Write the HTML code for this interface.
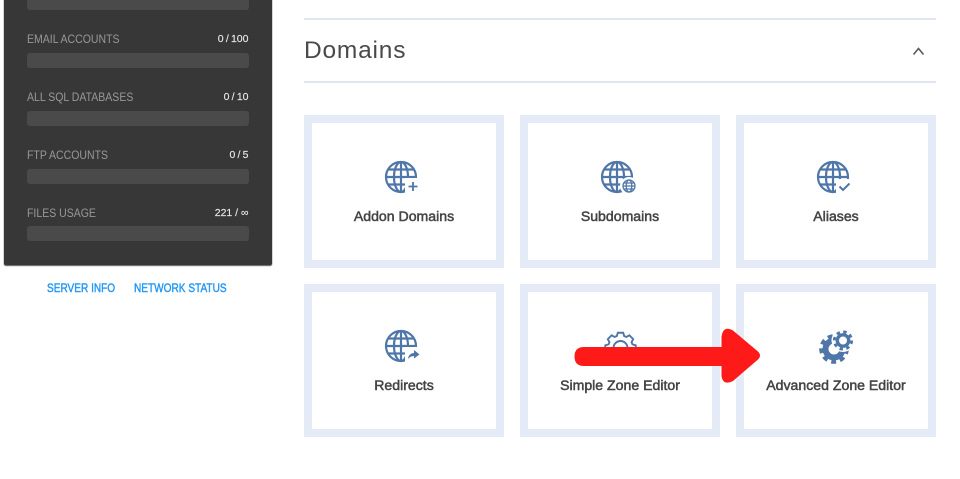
<!DOCTYPE html>
<html>
<head>
<meta charset="utf-8">
<style>
html,body{margin:0;padding:0;background:#fff;width:960px;height:479px;overflow:hidden;font-family:"Liberation Sans",sans-serif}
.a{position:absolute}
#side{left:3.5px;top:-10px;width:268.5px;height:274.500px;background:#373737;border-radius:2px;box-shadow:0 0 1px #777,0 1px 1px #555}
.bar{position:absolute;left:27px;width:221.500px;height:15px;background:#4a4a4a;border-radius:3px}
.lab{position:absolute;left:27px;font-size:12.300px;line-height:14px;color:#989898;white-space:nowrap;transform:scaleX(.855);transform-origin:0 0;margin-top:-.5px}
.val{position:absolute;right:711.5px;font-size:10.5px;line-height:14px;color:#e8e8e8;white-space:nowrap;word-spacing:-.7px;-webkit-text-stroke:.15px #e8e8e8}
.link{position:absolute;top:280.500px;font-size:12px;line-height:14px;color:#2196f3;white-space:nowrap;-webkit-text-stroke:.4px #2196f3;transform:scaleX(.84);transform-origin:0 0}
.hr{position:absolute;left:304px;width:632px;height:2px;background:#dfe6f1}
.card{position:absolute;width:184px;height:137px;border:8px solid #e4ebf7;background:#fff}
.t{position:absolute;left:0;width:184px;text-align:center;top:85px;font-size:14.100px;line-height:17px;color:#444;-webkit-text-stroke:.5px #444;white-space:nowrap}
svg.i{position:absolute;left:0;top:0}
</style>
</head>
<body>
<div class="a" id="side"></div>
<div class="bar" style="top:-5.500px"></div>
<div class="lab" style="top:32px">EMAIL ACCOUNTS</div><div class="val" style="top:32px">0 / 100</div>
<div class="bar" style="top:53px"></div>
<div class="lab" style="top:90px">ALL SQL DATABASES</div><div class="val" style="top:90px">0 / 10</div>
<div class="bar" style="top:111px"></div>
<div class="lab" style="top:148px">FTP ACCOUNTS</div><div class="val" style="top:148px">0 / 5</div>
<div class="bar" style="top:168.500px"></div>
<div class="lab" style="top:206px">FILES USAGE</div><div class="val" style="top:206px;word-spacing:0">221 / ∞</div>
<div class="bar" style="top:226px"></div>
<div class="link" style="left:47px">SERVER INFO</div>
<div class="link" style="left:133.5px">NETWORK STATUS</div>

<div class="hr" style="top:18px"></div>
<div class="a" style="left:304px;top:36px;font-size:24.500px;line-height:29px;color:#4a4a4a;letter-spacing:.8px">Domains</div>
<svg class="i" width="960" height="479" style="z-index:1"><path d="M913.500 54.500L918.500 48.500L923.500 54.500" fill="none" stroke="#5a5a5a" stroke-width="1.600"/></svg>
<div class="hr" style="top:81px"></div>

<div class="card" style="left:304px;top:115px"><div class="t">Addon Domains</div></div>
<div class="card" style="left:520px;top:115px"><div class="t">Subdomains</div></div>
<div class="card" style="left:736px;top:115px"><div class="t">Aliases</div></div>
<div class="card" style="left:304px;top:284px"><div class="t">Redirects</div></div>
<div class="card" style="left:520px;top:284px"><div class="t">Simple Zone Editor</div></div>
<div class="card" style="left:736px;top:284px"><div class="t">Advanced Zone Editor</div></div>

<svg class="i" width="960" height="479" style="z-index:2">
<defs>
<g id="globe" fill="none" stroke="#4f76a8" stroke-width="2.200">
<circle cx="0" cy="0" r="15"/>
<ellipse cx="0" cy="0" rx="7" ry="15"/>
<path d="M0-15V15M-15 0H15M-13-7.500H13M-13 7.500H13"/>
</g>
</defs>
<use href="#globe" x="401" y="177"/>
<rect x="405" y="178" width="16" height="16" fill="#fff"/>
<path d="M413 182V191M408.500 186.500H417.500" stroke="#4f76a8" stroke-width="1.800"/>

<use href="#globe" x="617" y="177"/>
<circle cx="629" cy="186" r="9" fill="#fff"/>
<g fill="none" stroke="#4f76a8" stroke-width="1.300"><circle cx="629" cy="186" r="6"/><ellipse cx="629" cy="186" rx="2.800" ry="6"/><path d="M623 186H635M624 183H634M624 189H634"/></g>

<use href="#globe" x="833" y="177"/>
<rect x="836" y="179" width="17" height="15" fill="#fff"/>
<path d="M839.500 186.500L843 190L849.500 183.500" fill="none" stroke="#4f76a8" stroke-width="2"/>

<use href="#globe" x="401" y="346"/>
<rect x="405" y="347" width="17" height="15" fill="#fff"/>
<path d="M408 359C408.500 354.500 411.500 353 414 353V350L419.500 354.500L414 358.500V356C411.500 356 409.500 357 408 359Z" fill="#4f76a8"/>

<g transform="translate(620.500 348)" fill="none" stroke="#4f76a8" stroke-width="1.900">
<path d="M-3.650-11.950L-2.690-15.260L2.690-15.260L3.650-11.950L5.870-11.040L8.890-12.700L12.700-8.890L11.040-5.870L11.950-3.650L15.260-2.690L15.260 2.690L11.950 3.650H-11.950L-15.260 2.690L-15.260-2.690L-11.950-3.650L-11.040-5.870L-12.700-8.890L-8.890-12.700L-5.870-11.040Z"/>
<circle r="7"/>
</g>

<g fill="none" stroke="#4f76a8">
<circle cx="834" cy="349" r="8.500" stroke-width="6"/>
<circle cx="834" cy="349" r="12.800" stroke-width="4" stroke-dasharray="4.900 4.040"/>
</g>
<circle cx="843" cy="340.500" r="11.500" fill="#fff"/>
<g fill="none" stroke="#4f76a8">
<circle cx="843" cy="340.500" r="5.700" stroke-width="3.400"/>
<circle cx="843" cy="340.500" r="8.700" stroke-width="2.800" stroke-dasharray="3.400 3.430"/>
</g>

<path d="M721.500 347V337Q723 325 733 330.500L758 351.500Q762 355.500 758 359.500L733 381Q723 386 721.500 376V366H584Q574.500 366 574.500 356.500Q574.500 347 584 347Z" fill="#ff1a1a"/>
</svg>
</body>
</html>
